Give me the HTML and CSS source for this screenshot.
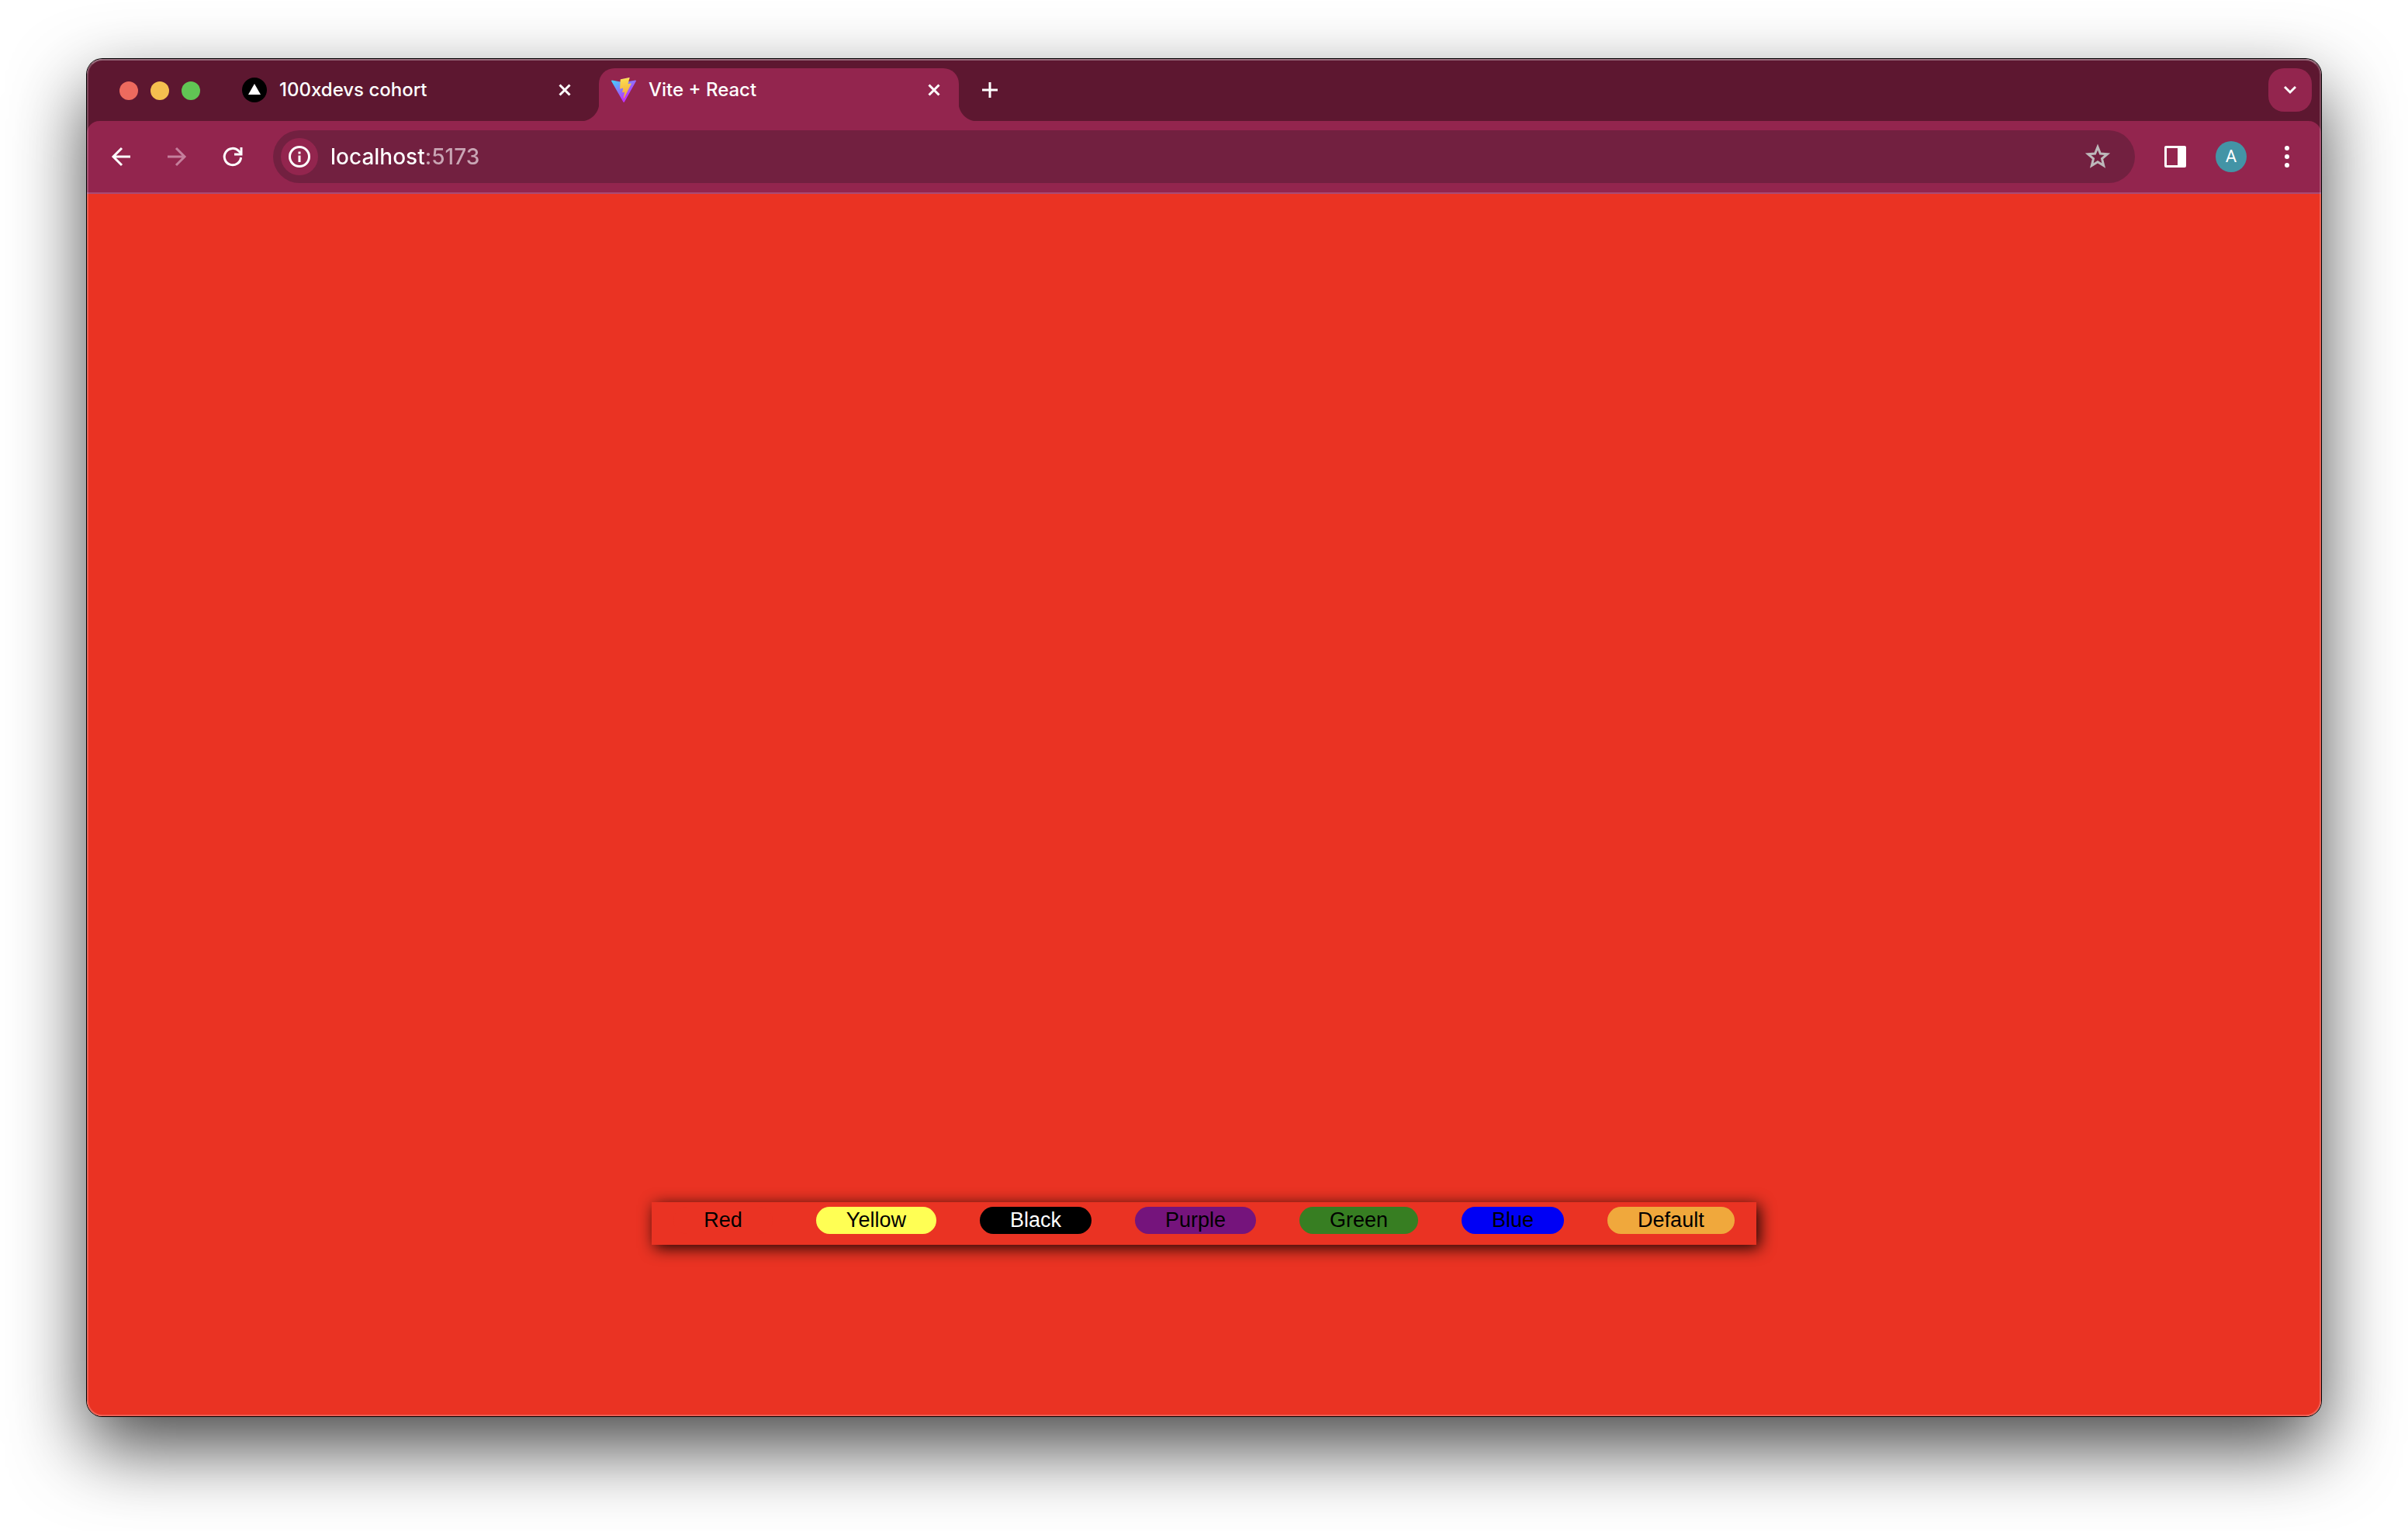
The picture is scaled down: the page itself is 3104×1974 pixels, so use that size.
FILE: index.html
```html
<!DOCTYPE html>
<html lang="en">
<head>
<meta charset="utf-8">
<title>Vite + React</title>
<link rel="stylesheet" href="styles.css">
</head>
<body>
<div class="window">
  <header class="chrome">
    <div class="tab-strip">
      <div class="lights">
        <button class="light light-close" aria-label="Close window"></button>
        <button class="light light-min" aria-label="Minimize window"></button>
        <button class="light light-max" aria-label="Zoom window"></button>
      </div>
      <div class="tabs">
        <div class="tab">
          <svg class="favicon" viewBox="0 0 32 32" aria-hidden="true"><circle cx="16" cy="16" r="16" fill="#000"/><path d="M16 8l8 14H8z" fill="#fff"/></svg>
          <button class="tab-title">100xdevs cohort</button>
          <button class="tab-close" aria-label="Close 100xdevs cohort"><svg class="icon-16" viewBox="0 0 16 16"><path d="M1.500 1.500l13 13M14.500 1.500l-13 13" stroke="currentColor" stroke-width="3"/></svg></button>
        </div>
        <div class="tab tab-active">
          <svg class="favicon" viewBox="0 0 256 257" aria-hidden="true">
            <defs>
              <linearGradient id="vite-body" x1="-.828%" x2="57.636%" y1="7.652%" y2="78.411%"><stop offset="0%" stop-color="#41D1FF"/><stop offset="100%" stop-color="#BD34FE"/></linearGradient>
              <linearGradient id="vite-bolt" x1="43.376%" x2="50.316%" y1="2.242%" y2="89.03%"><stop offset="0%" stop-color="#FFEA83"/><stop offset="8.333%" stop-color="#FBDB4F"/><stop offset="100%" stop-color="#F3A83B"/></linearGradient>
            </defs>
            <path fill="url(#vite-body)" d="M255.153 37.938L134.897 252.976c-2.483 4.44-8.862 4.466-11.382.048L.875 37.958c-2.746-4.814 1.371-10.646 6.827-9.67l120.385 21.517a6.537 6.537 0 0 0 2.322-.004l117.867-21.483c5.438-.991 9.574 4.796 6.877 9.62Z"/>
            <path fill="url(#vite-bolt)" d="M185.432.063L96.44 17.501a3.268 3.268 0 0 0-2.634 3.014l-5.474 92.456a3.268 3.268 0 0 0 3.997 3.378l24.777-5.718c2.318-.535 4.413 1.507 3.936 3.838l-7.361 36.047c-.495 2.426 1.782 4.5 4.151 3.78l15.304-4.649c2.372-.72 4.652 1.36 4.15 3.788l-11.698 56.621c-.732 3.542 3.979 5.473 5.943 2.437l1.313-2.028l72.516-144.72c1.215-2.423-.88-5.186-3.54-4.672l-25.505 4.922c-2.396.462-4.435-1.77-3.759-4.114l16.646-57.705c.677-2.35-1.37-4.583-3.769-4.113Z"/>
          </svg>
          <button class="tab-title">Vite + React</button>
          <button class="tab-close" aria-label="Close Vite + React"><svg class="icon-16" viewBox="0 0 16 16"><path d="M1.500 1.500l13 13M14.500 1.500l-13 13" stroke="currentColor" stroke-width="3"/></svg></button>
        </div>
      </div>
      <button class="new-tab" aria-label="New tab"><svg class="icon-20" viewBox="0 0 20 20"><path d="M10 0v20M0 10h20" stroke="currentColor" stroke-width="3"/></svg></button>
      <button class="tab-search" aria-label="Search tabs"><svg class="icon-16" viewBox="0 0 16 16"><path d="M1 4l7 7 7-7" fill="none" stroke="currentColor" stroke-width="3"/></svg></button>
    </div>
    <div class="toolbar">
      <div class="tool-group">
        <button class="tool" aria-label="Back"><svg class="icon-32" viewBox="0 0 32 32"><path d="M28 16H6M17 5L6 16l11 11" fill="none" stroke="currentColor" stroke-width="3"/></svg></button>
        <button class="tool tool-dim" aria-label="Forward"><svg class="icon-32" viewBox="0 0 32 32"><path d="M4 16h22M15 5l11 11-11 11" fill="none" stroke="currentColor" stroke-width="3"/></svg></button>
        <button class="tool" aria-label="Reload"><svg class="icon-32" viewBox="0 0 32 32"><path d="M26.600 17A10.700 10.700 0 1 1 23.800 8.800L27 12" fill="none" stroke="currentColor" stroke-width="3"/><path d="M28.500 4v10.500H18v-3h7.500V4z" fill="currentColor"/></svg></button>
      </div>
      <div class="omnibox">
        <button class="site-info" aria-label="View site information"><svg class="icon-28" viewBox="0 0 28 28"><circle cx="14" cy="14" r="12.500" fill="none" stroke="currentColor" stroke-width="3"/><path d="M12.500 12.500h3v8.500h-3zM12.500 7.500h3v3h-3z" fill="currentColor"/></svg></button>
        <input class="address" type="text" value="localhost:5173" aria-label="Address" spellcheck="false">
        <button class="bookmark" aria-label="Bookmark this tab"><svg class="icon-36" viewBox="0 0 36 36"><path d="M18 5.500L21.400 14l9 .7-6.900 5.900 2.200 8.900L18 24.700l-7.700 4.800 2.200-8.900-6.900-5.900 9-.7z" fill="none" stroke="currentColor" stroke-width="3"/></svg></button>
      </div>
      <div class="tool-group">
        <button class="tool" aria-label="Side panel"><svg class="icon-28" viewBox="0 0 28 28"><path fill-rule="evenodd" d="M2 0h24a2 2 0 0 1 2 2v24a2 2 0 0 1-2 2H2a2 2 0 0 1-2-2V2a2 2 0 0 1 2-2zM3 3v22h14V3z" fill="currentColor"/></svg></button>
        <button class="tool" aria-label="Profile"><span class="avatar">A</span></button>
        <button class="tool" aria-label="Menu"><svg class="icon-28" viewBox="0 0 28 28"><g fill="currentColor"><circle cx="14" cy="3" r="3"/><circle cx="14" cy="14" r="3"/><circle cx="14" cy="25" r="3"/></g></svg></button>
      </div>
    </div>
  </header>
  <main class="page">
    <div class="palette">
      <button class="swatch swatch-red">Red</button>
      <button class="swatch swatch-yellow">Yellow</button>
      <button class="swatch swatch-black">Black</button>
      <button class="swatch swatch-purple">Purple</button>
      <button class="swatch swatch-green">Green</button>
      <button class="swatch swatch-blue">Blue</button>
      <button class="swatch swatch-default">Default</button>
    </div>
  </main>
</div>
</body>
</html>
```
FILE: styles.css
```css
* { box-sizing: border-box; }

body {
  margin: 0;
  min-height: 100vh;
  padding: 76px 112px 148px;
  display: flex;
  background: #fff;
  font-family: Inter, "Liberation Sans", sans-serif;
  overflow: hidden;
}

button {
  margin: 0;
  padding: 0;
  border: 0;
  background: none;
  color: inherit;
  font: inherit;
}

svg { display: block; flex: none; }
.icon-16 { width: 16px; height: 16px; }
.icon-20 { width: 20px; height: 20px; }
.icon-28 { width: 28px; height: 28px; }
.icon-32 { width: 32px; height: 32px; }
.icon-36 { width: 36px; height: 36px; }

.window {
  position: relative;
  flex: 1;
  display: flex;
  flex-direction: column;
  border-radius: 20px;
  box-shadow: 0 0 0 1px #000, 0 40px 96px rgba(0, 0, 0, .72);
}

/* light rim along the window's inner edge */
.window::after {
  content: "";
  position: absolute;
  inset: 0;
  border: 2px solid rgba(255, 255, 255, .22);
  border-top-color: rgba(255, 255, 255, .36);
  border-radius: 20px;
  pointer-events: none;
}

.chrome {
  background: #5d1730;
  border-radius: 20px 20px 0 0;
  color: #fff;
}

.tab-strip {
  display: flex;
  align-items: flex-start;
  gap: 12px;
  padding: 12px 12px 0 42px;
}

.lights {
  display: flex;
  align-items: center;
  gap: 16px;
  height: 58px;
  margin-right: 26px;
}
.light { width: 24px; height: 24px; border-radius: 50%; }
.light-close { background: #ed6a5e; }
.light-min { background: #f5bf4f; }
.light-max { background: #61c554; }

.tabs { display: flex; gap: 12px; }

.tab {
  position: relative;
  display: flex;
  align-items: center;
  width: 464px;
  height: 68px;
  padding: 0 16px 12px;
  border-radius: 20px 20px 0 0;
}
.tab-active { background: #93254e; }

/* flared feet of the active tab */
.tab-active::before,
.tab-active::after {
  content: "";
  position: absolute;
  bottom: 0;
  width: 24px;
  height: 24px;
}
.tab-active::before {
  right: 100%;
  background: radial-gradient(circle at 0 0, transparent 24px, #93254e 25px);
}
.tab-active::after {
  left: 100%;
  background: radial-gradient(circle at 100% 0, transparent 24px, #93254e 25px);
}

.favicon { width: 32px; height: 32px; }
.tab-title {
  flex: 1;
  padding-left: 16px;
  text-align: left;
  font-size: 24px;
  font-weight: 500;
  line-height: 32px;
}
.tab-close { display: grid; place-items: center; width: 32px; height: 32px; }

.new-tab,
.tab-search {
  display: grid;
  place-items: center;
  width: 56px;
  height: 56px;
  border-radius: 20px;
}
.tab-search { margin-left: auto; background: #93254e; }

.toolbar {
  display: flex;
  align-items: center;
  gap: 28px;
  padding: 12px 20px;
  background: #93254e;
  border-bottom: 2px solid #a94a75;
  border-radius: 16px 16px 0 0;
}
.tool-group { display: flex; gap: 24px; }
.tool { display: grid; place-items: center; width: 48px; height: 48px; }
.tool-dim { color: #c57f9c; }

.omnibox {
  flex: 1;
  display: flex;
  align-items: center;
  height: 68px;
  padding: 0 30px 0 10px;
  border-radius: 34px;
  background: #722040;
}
.site-info {
  display: grid;
  place-items: center;
  width: 48px;
  height: 48px;
  border-radius: 50%;
  background: #93254e;
}
.address {
  flex: 1;
  height: 40px;
  margin-left: 16px;
  padding: 0;
  border: 0;
  outline: 0;
  /* host in white, port dimmed */
  background: linear-gradient(90deg, #fff 122px, #c9a5b4 122px);
  background-clip: text;
  -webkit-text-fill-color: transparent;
  color: #fff;
  font: 500 28px/40px Inter, "Liberation Sans", sans-serif;
}
.bookmark { color: #bdb9bb; }

.avatar {
  display: grid;
  place-items: center;
  width: 40px;
  height: 40px;
  border-radius: 50%;
  background: #4394a6;
  font: 400 22px/40px Roboto, sans-serif;
}

.page {
  flex: 1;
  display: flex;
  align-items: flex-end;
  justify-content: center;
  padding-bottom: 221px;
  background: #ea3323;
  border-radius: 0 0 20px 20px;
}

.palette {
  display: flex;
  gap: 56px;
  padding: 6px 28px 14px;
  background: #ea3323;
  box-shadow: 4px 4px 20px rgba(0, 0, 0, .9);
}

.swatch {
  padding: 2px 39px;
  border-radius: 18px;
  color: #000;
  font: 27px/31px "Liberation Sans", Arial, sans-serif;
}
.swatch-red { background: #ea3323; }
.swatch-yellow { background: #ffff54; }
.swatch-black { background: #000; color: #fff; }
.swatch-purple { background: #75147c; }
.swatch-green { background: #377e22; }
.swatch-blue { background: #0000f5; }
.swatch-default { background: #f0a83c; }
```
